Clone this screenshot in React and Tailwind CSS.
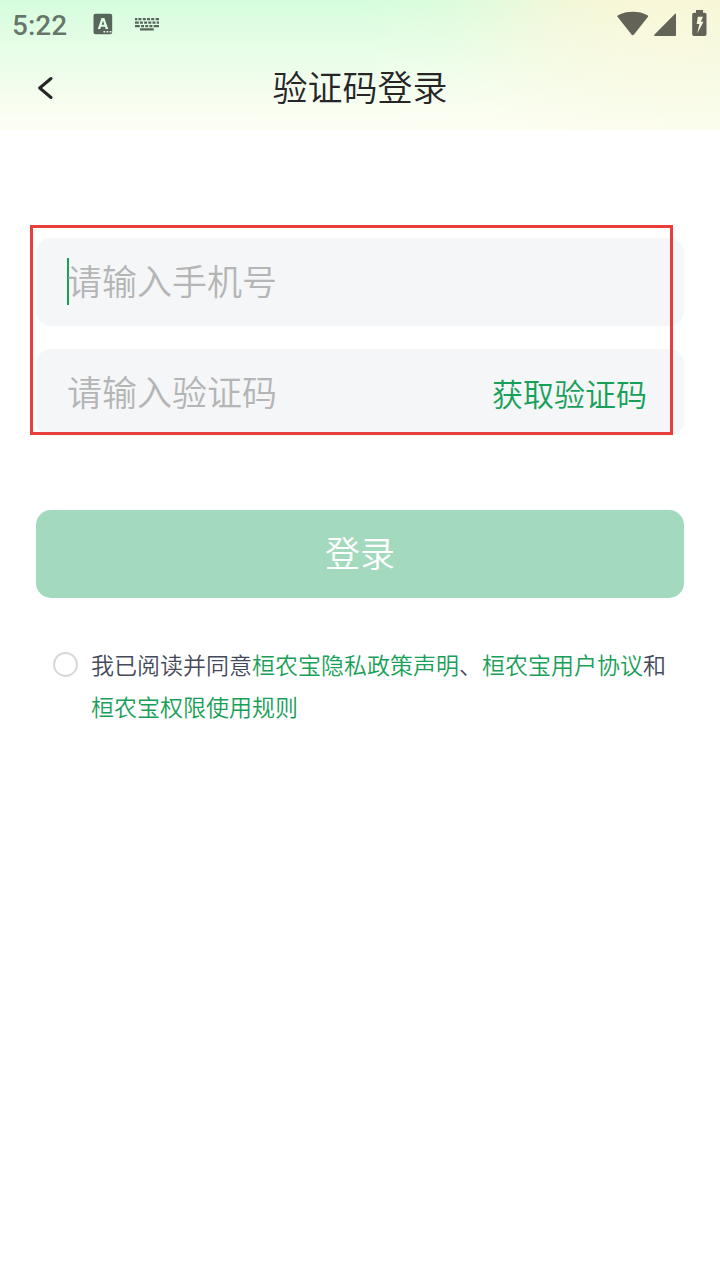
import React from "react";

function StatusBar() {
  return (
    <div className="flex h-12 items-start justify-between text-black/60">
      <div className="flex items-start">
        <span className="ml-[12px] mt-[9px] w-[81px] font-['Roboto',sans-serif] text-[28px] font-medium leading-[33px] text-black/55">5:22</span>
        <svg className="mt-[13px] h-[22px] w-5" viewBox="0 0 20 22">
          <path
            fill="currentColor"
            fillRule="evenodd"
            d="M2.500 .7h14.700a2 2 0 0 1 2 2v16.600a2 2 0 0 1-2 2H2.500a2 2 0 0 1-2-2V2.700a2 2 0 0 1 2-2ZM8.500 5 4.800 16h2.500l.7-2.200h4l.7 2.200h2.500L11.400 5Zm1.500 2.700 1.300 4.100H8.700ZM10.500 18v1.600h1.700V18Zm3.100 0v1.600h1.700V18Zm3.100 0v1.600h1.700V18Z"
          />
        </svg>
        <svg className="ml-[22px] mt-[18px] h-[13px] w-6" viewBox="0 0 24 13" fill="currentColor">
          <path d="M0 0h2.400v2.200H0zM3.400 0h3v2.200h-3zM7.800 0h3v2.200h-3zM12 0h3v2.200h-3zM16.200 0h3v2.200h-3zM20.600 0H24v2.200h-3.400zM0 3.500h3.800v2.200H0zM4.900 3.500h3v2.200h-3zM9.100 3.500h3v2.200h-3zM13.300 3.500h3v2.200h-3zM17.500 3.500h3v2.200h-3zM21.700 3.500H24v2.200h-2.300zM0 7h4.800v2.200H0zM6 7h3v2.200H6zM10.200 7h3v2.200h-3zM14.400 7h3v2.200h-3zM18.600 7H24v2.200h-5.400zM5 10.200h13.800v2.200H5z" />
        </svg>
      </div>
      <div className="flex items-start">
        <svg className="mt-[11px] h-[25px] w-8" viewBox="0 0 32 25">
          <path fill="currentColor" d="M.7 6Q-.2 5 1 4.200C10-.4 22-.4 30.500 4.200q1.200.8.300 1.800L17 23.600q-1.300 1.500-2.500 0Z" />
        </svg>
        <svg className="ml-[5px] mt-[13px] h-[23px] w-[23px]" viewBox="0 0 23 23">
          <path fill="currentColor" d="M.5 21.400 20.600 1.200Q22-.2 22 1.800V22q0 .9-.9.900H1.200Q-.8 22.900 .5 21.400Z" />
        </svg>
        <svg className="ml-[15px] mr-[13px] mt-[10px] h-[26px] w-[15px]" viewBox="0 0 15 26">
          <path
            fill="currentColor"
            fillRule="evenodd"
            d="M4 0h7v2.800h1.700a1.800 1.800 0 0 1 1.800 1.800v19.600a1.800 1.800 0 0 1-1.800 1.800H2A1.800 1.800 0 0 1 .2 24.200V4.600A1.800 1.800 0 0 1 2 2.800H4ZM5.800 6.700 4.700 14h2.700L5.200 23.400 11.500 11.700H8.800L11 6.700Z"
          />
        </svg>
      </div>
    </div>
  );
}

function Header() {
  return (
    <header className="h-[129.500px] bg-[radial-gradient(ellipse_240px_220px_at_700px_50px,#f3f8d950_0%,#f3f8d930_50%,#f3f8d900_100%),linear-gradient(180deg,#fefef400_0%,#fefef4_100%),radial-gradient(ellipse_310px_340px_at_670px_-10px,#fbf6d6_0%,#f8f7d7_18%,#f5f7d8e0_35%,#f2f8d998_52%,#eefadb44_72%,#e8fcdc00_100%),linear-gradient(180deg,#d5fddd_0%,#e0fde4_100%)]">
      <StatusBar />
      <div className="grid h-20 grid-cols-[1fr_auto_1fr] items-center">
        <button aria-label="返回" className="ml-[37px] block w-5">
          <svg className="block h-6 w-4" viewBox="0 0 16 24" fill="none">
            <path d="M14 2.500 2.700 12 14 21.500" stroke="#262626" strokeWidth="3" strokeLinecap="round" strokeLinejoin="round" />
          </svg>
        </button>
        <h1 className="pb-1 text-[35px] leading-[50px] text-[#262626]">验证码登录</h1>
        <span />
      </div>
    </header>
  );
}

export default function App() {
  return (
    <div className="h-[1280px] w-[720px] overflow-hidden bg-white font-['Noto_Sans_CJK_SC_DemiLight','Noto_Sans_CJK_SC',sans-serif] font-[350]">
      <Header />
      <main className="px-9 pt-[108.500px]">
        <div className="relative flex flex-col gap-[23px]">
          <div className="flex h-[88px] items-center rounded-[15px] bg-[#f4f6f8] pb-[2px] pl-[31px]">
            <span className="h-[47px] w-[2px] bg-[#18a058]" />
            <span className="-ml-[2px] pb-[2px] text-[35px] leading-[50px] text-[#b5b5b5]">请输入手机号</span>
          </div>
          <div className="flex h-[87px] items-center justify-between rounded-[15px] bg-[#f4f6f8] pb-[2px] pl-[31px] pr-[37px]">
            <span className="pb-px text-[35px] leading-[50px] text-[#b5b5b5]">请输入验证码</span>
            <button className="pt-[2px] text-[31px] leading-[46px] text-[#18a058]">获取验证码</button>
          </div>
          <div className="pointer-events-none absolute -left-[6px] -top-[13px] h-[210px] w-[643px] border-3 border-[#e73e3e]" />
        </div>
        <button className="mt-[74px] flex h-[88px] w-full items-center justify-center rounded-[15px] bg-[#a3dabe] pb-1 text-[35px] leading-[50px] text-white">
          登录
        </button>
        <div className="mt-[45px] flex pl-[17px]">
          <span className="mt-[9px] size-[25px] shrink-0 rounded-full border-2 border-[#d8d8d8]" />
          <p className="ml-[13px] whitespace-nowrap text-[23px] leading-[42px] text-[#454a5b]">
            我已阅读并同意<span className="text-[#18a058]">桓农宝隐私政策声明</span>、<span className="text-[#18a058]">桓农宝用户协议</span>和
            <br />
            <span className="text-[#18a058]">桓农宝权限使用规则</span>
          </p>
        </div>
      </main>
    </div>
  );
}
